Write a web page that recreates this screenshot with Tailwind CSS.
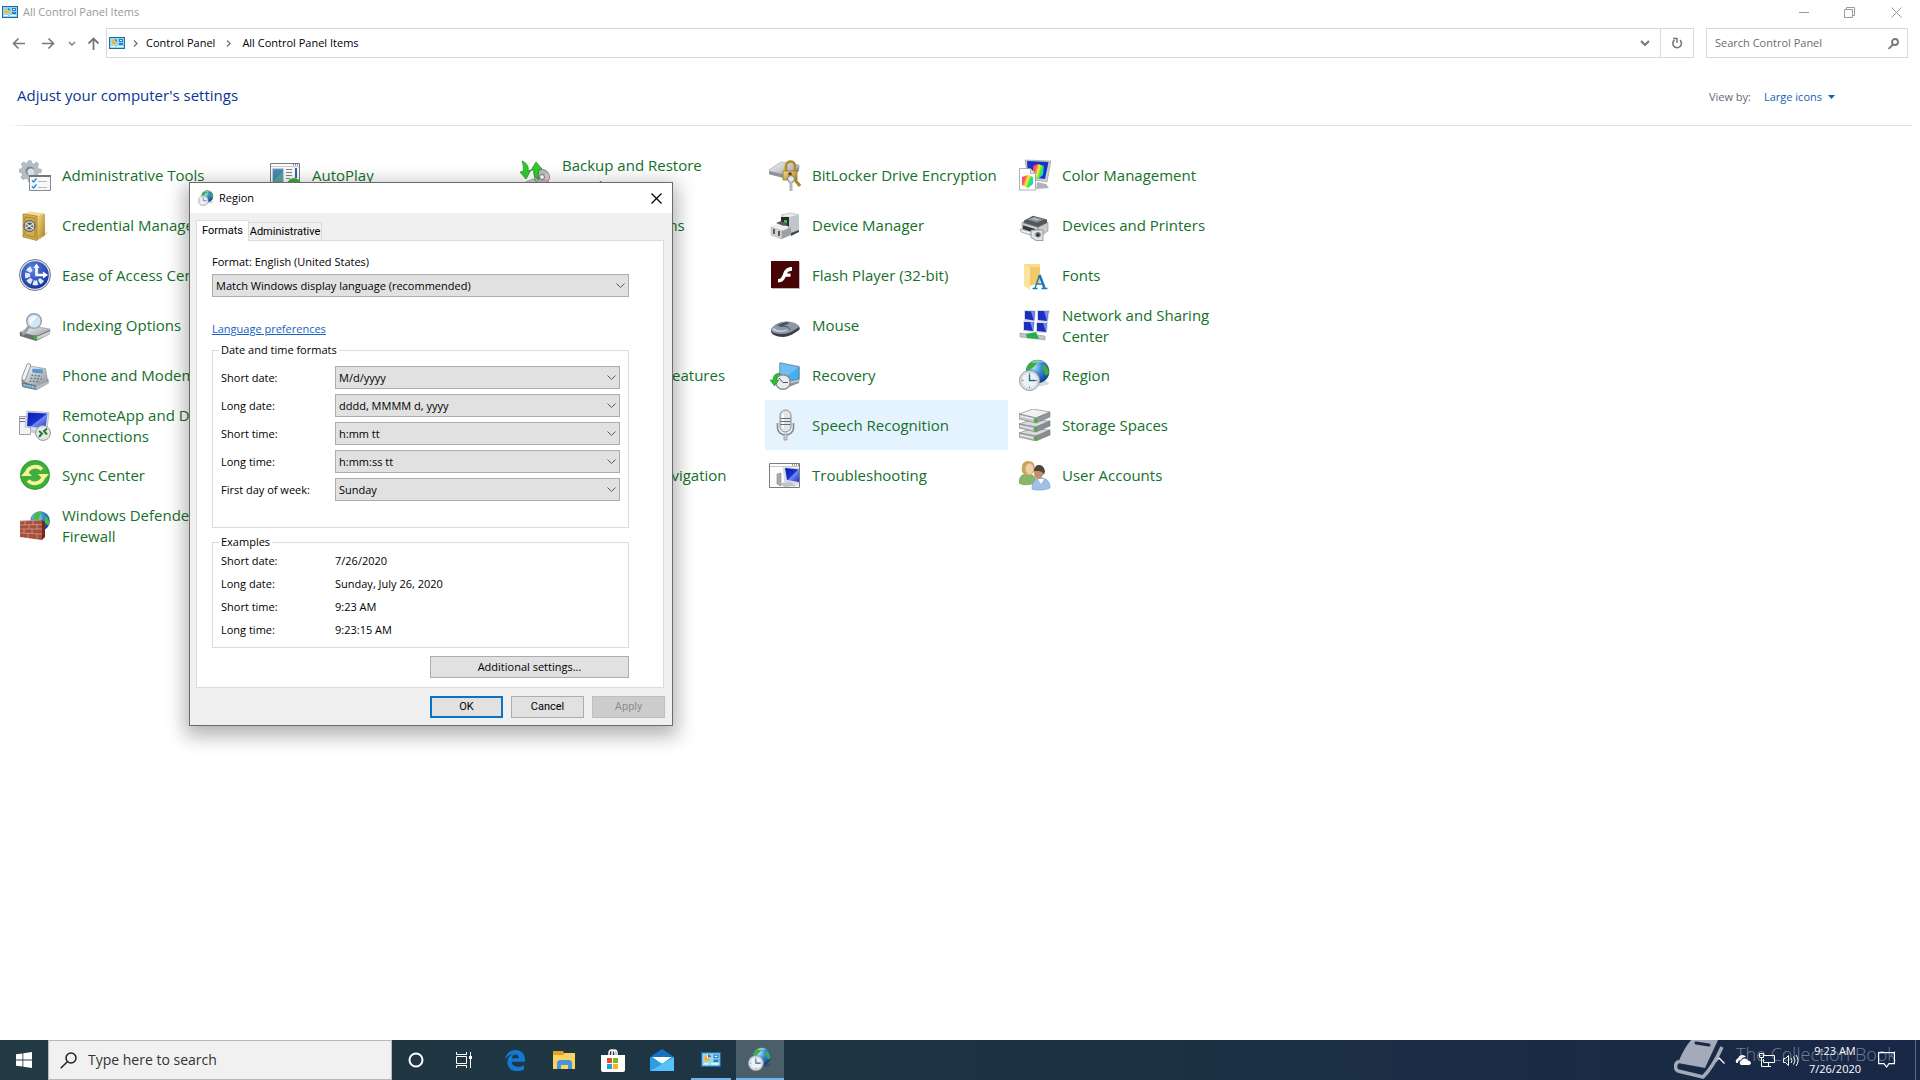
<!DOCTYPE html>
<html lang="en">
<head>
    <meta charset="UTF-8">
    <meta name="viewport" content="width=device-width, initial-scale=1.0">
    <script src="https://cdn.jsdelivr.net/npm/@tailwindcss/browser@4"></script>
    <title>All Control Panel Items</title>
</head>
<body class="relative flex h-screen flex-col overflow-hidden bg-white font-['Open_Sans','Noto_Sans',sans-serif] text-[11px] leading-4 text-black">

    <!-- shared icons -->
    <svg class="absolute size-0" aria-hidden="true">
        <defs>
            <radialGradient id="g-globe" cx="0.35" cy="0.3" r="0.8"><stop offset="0" stop-color="#b5e4fb"/><stop offset="0.4" stop-color="#3d8edb"/><stop offset="1" stop-color="#0a2f80"/></radialGradient>
            <linearGradient id="g-screen" x1="0" y1="0" x2="1" y2="1"><stop offset="0" stop-color="#0a1cae"/><stop offset="0.5" stop-color="#1a32d0"/><stop offset="0.55" stop-color="#6f8df5"/><stop offset="1" stop-color="#1b2fc4"/></linearGradient>
            <linearGradient id="g-metal" x1="0" y1="0" x2="1" y2="1"><stop offset="0" stop-color="#f7f8f9"/><stop offset="1" stop-color="#8d9196"/></linearGradient>
            <linearGradient id="g-gold" x1="0" y1="0" x2="1" y2="1"><stop offset="0" stop-color="#f6dd8c"/><stop offset="1" stop-color="#ab7d1c"/></linearGradient>
            <linearGradient id="g-rgb" x1="0" y1="0" x2="1" y2="0.4"><stop offset="0" stop-color="#ff2bd0"/><stop offset="0.3" stop-color="#ff5a3c"/><stop offset="0.55" stop-color="#ffe93b"/><stop offset="0.8" stop-color="#2ee84a"/><stop offset="1" stop-color="#24c7f5"/></linearGradient>
            <radialGradient id="g-ease" cx="0.4" cy="0.3" r="0.8"><stop offset="0" stop-color="#5c86e6"/><stop offset="1" stop-color="#0c2a94"/></radialGradient>
        </defs>

        <symbol id="panel" viewBox="0 0 16 12">
            <path fill="#1f6b9c" d="M0 0h16v12H0z"/><path fill="#8ed8fa" d="M1 1h14v10H1z"/>
            <circle cx="5" cy="5" r="2.6" fill="#fff"/><path fill="#e8b23c" d="M5 5V2.400A2.600 2.600 0 1 0 7.600 5z"/><path fill="#2d83bd" d="M5.600 1.900v2.500h2.500A2.500 2.500 0 0 0 5.600 1.900z"/>
            <path fill="#2d7fb5" d="M10 2h4v3h-4zM10 6h4v2h-4z"/><path fill="#fff" d="M11 3h2v1h-2zM2 9h4v1H2zM8 9h6v1H8z"/>
        </symbol>
        <symbol id="globe-clock" viewBox="0 0 32 32">
            <ellipse cx="20" cy="24" rx="10" ry="3" fill="#000" opacity="0.15"/>
            <circle cx="18.500" cy="12.500" r="11.800" fill="url(#g-globe)"/>
            <path fill="#3dae3a" d="M9 6c3-4 8-6 13-4-2 2-4 1-5 3s-2 3-4 4-3 4-5 3c-1-2 0-4 1-6zM25 5c3 2 5 6 5 9l-3 3c-2-2-1-4-3-6s0-4 1-6z"/>
            <path fill="#2f9c46" opacity="0.7" d="M14 17c3-2 6 0 7 2l-1 3z"/>
            <path fill="#dff5ff" opacity="0.5" d="M12 4c4-4 11-3 13 0-4-1-9 0-13 0z"/>
            <circle cx="10.500" cy="21.500" r="10" fill="#dde2e8" stroke="#8f989f"/><circle cx="10.500" cy="21.500" r="8" fill="#eef2f7" stroke="#c3cad1" stroke-width="0.700"/>
            <path stroke="#7a828a" fill="none" d="M10.500 14v1.500M10.500 27.500V29M3 21.500h1.500M16.500 21.500H18"/>
            <path stroke="#256b8c" stroke-width="1.400" fill="none" d="M10.500 15.500v6h6"/>
        </symbol>
        <symbol id="admin" viewBox="0 0 32 32">
            <path fill="#b4bdc6" stroke="#94a0ab" stroke-width="0.600" d="m9 2 3-.6.8 3 2 .8L17.500 3l2.200 2-1.400 2.800 1 2 3 .5v3l-3 .7-.8 2 1.600 2.500-2.200 2.200-2.700-1.500-2 .8-.7 3h-3l-.7-3-2-.8-2.600 1.500L2 18.500l1.500-2.700-.8-2-2.500-.6v-3l2.700-.6.8-2L2.300 5l2.200-2.100L7 4.500l1.500-.6z"/>
            <circle cx="11" cy="12" r="4.500" fill="#7b8996"/><circle cx="12" cy="13" r="3.500" fill="#d9dfe4"/>
            <path fill="#f8f8f8" stroke="#858b91" d="M10.500 16.500h21v15h-21z"/><path fill="#6f767c" d="M10 16h22v2H10z"/>
            <path stroke="#2a8ae0" stroke-width="1.500" fill="none" d="m13 21.500 1.500 1.500 3-3.500M13 27.500l1.500 1.500 3-3.500"/><path stroke="#b9b9b9" d="M19 22.500h9M19 28.500h9"/>
        </symbol>
        <symbol id="safe" viewBox="0 0 32 32">
            <path fill="#c7c9c4" d="m24 25 6-3-4 5-6 4z" opacity="0.6"/>
            <path fill="#f0dc98" d="m4 5 7-2.500 15 2L18 7z"/><path fill="url(#g-gold)" d="m18 7 8-2.500V26l-8 5.500z"/><path fill="#d4ae4a" stroke="#8f6b15" stroke-width="0.600" d="m4 5 14 2v24.500L4 28z"/>
            <path fill="none" stroke="#a8822b" d="m6 8 10 1.500v19L6 26z"/><circle cx="10.500" cy="17" r="5.500" fill="#babdbd" stroke="#4d5255"/><circle cx="10.500" cy="17" r="3.200" fill="#4f5459"/><path stroke="#e5e7e8" stroke-width="1.300" d="m6.500 14 8 6M6 19.500l9-5"/>
        </symbol>
        <symbol id="ease" viewBox="0 0 32 32">
            <circle cx="16" cy="16" r="15.500" fill="#e6e9ee" stroke="#6f7787"/><circle cx="16" cy="16" r="13.800" fill="url(#g-ease)"/>
            <path stroke="#e3eaf9" stroke-width="5" stroke-dasharray="4.500 1.500" fill="none" d="M12.500 9.500A7.500 7.500 0 0 0 9.500 20 8 8 0 0 0 23 20.500"/>
            <path stroke="#fff" stroke-width="2.600" fill="none" d="M17.500 17.300V7M17.500 16h8"/><path fill="#fff" d="m14.500 9 3-4.500 3 4.500zM24 12.500l5 3.500-5 3.500z"/>
        </symbol>
        <symbol id="indexing" viewBox="0 0 32 32">
            <path fill="url(#g-metal)" stroke="#85898d" stroke-width="0.500" d="m1 23 13-6 17 3v4l-14 6-16-4z"/><path fill="#6a6f73" d="m1 23 16 4 14-6v4l-14 7-16-5z"/><path fill="#cdd0d3" d="m17 28 14-6v3l-14 6z"/><path fill="#39b52b" d="m15 26 3 .5V31l-3-.500z"/>
            <circle cx="15" cy="12" r="7.300" fill="#cfe6f8" stroke="#9aa2aa" stroke-width="1.500"/><path d="M10 11c1-3 5-5 8-3l-7 8z" fill="#fff" opacity="0.8"/><path stroke="#9ba0a5" stroke-width="3" stroke-linecap="round" d="m9.500 18-5 7"/>
        </symbol>
        <symbol id="phone" viewBox="0 0 32 32">
            <g transform="translate(1 3) scale(0.95)">
                <path fill="#7b858c" d="m1 19 3 5 14 5 12-7v-4z"/><path fill="url(#g-metal)" stroke="#818589" stroke-width="0.600" d="m9 4 18 3 2 13-13 6-13-6z"/>
                <path fill="#5596cf" d="m13 7 11 1v4l-11-1z"/><path stroke="#5d7d94" stroke-width="1.600" stroke-dasharray="2 1.500" d="m12 14 11 1M11 17l12 1M10 20l11 1"/>
                <path fill="none" stroke="#7e8387" stroke-width="5" stroke-linecap="round" d="M9 4 4 17"/><path fill="none" stroke="#eff1f2" stroke-width="3.500" stroke-linecap="round" d="M9 4 4 17"/>
                <path fill="#66a5c4" stroke="#667278" d="m2 22 15 3v4L3 26z"/><path stroke="#fff" stroke-dasharray="1 2" d="m4 24 12 3"/><path fill="#b5b9bc" d="m17 25 13-5v3l-13 7z"/>
            </g>
        </symbol>
        <symbol id="remote" viewBox="0 0 32 32">
            <path fill="#f3f4f6" stroke="#98a0a8" d="M.5 7.500h11v18H.500z"/><path stroke="#69737c" d="M1 9.500h5M1 12.500h5"/>
            <path fill="#dde1e5" stroke="#9aa0a7" stroke-width="0.600" d="m8 2 22 1.500-2 17L6 18z"/><path fill="url(#g-screen)" d="m9 3.500 19.500 1-2 15L8 17z"/><path fill="#c8ccd1" d="m12 20 6 1v4l-7-2z"/>
            <circle cx="24" cy="24" r="7.400" fill="#e7e9e8" stroke="#8f9594"/><path fill="none" stroke="#2f7a34" stroke-width="2" d="m20 22 3 2.500-3 3.500M28 19.500 25 22l3 3.500"/>
        </symbol>
        <symbol id="sync" viewBox="0 0 32 32">
            <circle cx="16" cy="16" r="15" fill="#3fae3b"/><circle cx="16" cy="16" r="14" fill="none" stroke="#2e9632" opacity="0.5"/>
            <path fill="none" stroke="#f5f39b" stroke-width="3.800" d="M7.500 16c0-8 10-11 15.500-5.500M24.500 16c0 8-10 11-15.500 5.500"/><path fill="#f7f18e" d="m2 17 5.500-6 5.500 6zM30 15l-5.500 6-5.500-6z"/>
        </symbol>
        <symbol id="firewall" viewBox="0 0 32 32">
            <circle cx="21" cy="12" r="9.800" fill="url(#g-globe)"/><path fill="#4cb944" d="M15 5c3-3 7-3 9-2l-3 3-1 5-6 1zM26 7c4 2 5 6 4 10l-4-3z"/>
            <path fill="#a5503f" d="m1 12 22-1v20L1 28z"/><path fill="#6d2a22" d="m23 11 3 2v15l-3 3z"/>
            <path stroke="#dba893" stroke-width="0.700" fill="none" d="m1 12 22-1M1 16l22-.500M1 20h22M1 24l22 1M6 12v4M14 11.500V16M10 16v4M18 15.500V20M5 20v4M13 20v4.500M9 24.500V29M18 25v4.500"/>
        </symbol>
        <symbol id="autoplay" viewBox="0 0 32 32">
            <path fill="#fbfbfb" stroke="#777e84" d="M1.500 4.500h29v26h-29z"/><path stroke="#c9cdd1" d="M2 7.500h28"/><path stroke="#444" stroke-dasharray="1 1" d="M24 5.800h6"/>
            <path fill="#bcd4e4" d="M3 9h12v20H3z"/><path fill="#57a69e" d="M4 12c5-3 8 0 10-1v18H4z"/><path fill="#3f7fb2" d="M4 10h10v3L4 22z" opacity="0.7"/>
            <path stroke="#7f868d" d="M17 10.500h6M17 13.500h6M17 16.500h6M17 19.500h4"/><path stroke="#3366b5" stroke-width="2" d="M27 9v10"/><circle cx="25" cy="26" r="7" fill="#36ad38"/>
        </symbol>
        <symbol id="backup" viewBox="0 0 32 32">
            <path fill="#c9ccce" stroke="#777" stroke-width="0.500" d="m2 25 12-5 16 3-8 9z"/><circle cx="23" cy="18" r="7.500" fill="#b9bbc0" stroke="#82868a"/><path fill="#e8c0d6" d="m23 18 6-4a8 8 0 0 1 0 8z"/><circle cx="23" cy="18" r="2.500" fill="#fff" stroke="#777"/>
            <path fill="#38c92f" stroke="#17871a" stroke-width="0.700" d="M3 2c5 2 7 6 6 10l3-1-5 9-6-7 3-.500c1-4 0-7-1-10.500zM17 3l6 7-3 .5c-1 4-1 6 0 10-5-2-6-6-5-10l-3 1z"/>
        </symbol>
        <symbol id="bitlocker" viewBox="0 0 32 32">
            <path fill="url(#g-metal)" stroke="#888" stroke-width="0.500" d="M0 11 12 3l18 3v4l-12 9L0 15z"/><path fill="#8f9396" d="m0 12 18 4 12-8v4l-12 8L0 15z"/>
            <path fill="none" stroke="#b08a2a" stroke-width="2.600" d="M17 12V7c0-6 9-6 9 0v5"/><path fill="url(#g-gold)" stroke="#8d6818" stroke-width="0.700" d="M14 12h14v9H14z"/><circle cx="21" cy="15" r="1.800" fill="#5d430b"/>
            <path fill="none" stroke="#ad8425" stroke-width="3" d="m26 21 5 6"/><circle cx="22" cy="20" r="3.500" fill="#e3e6e8" stroke="#777d82"/><path fill="none" stroke="#858a8e" stroke-width="2.600" d="M22 23v9"/><path stroke="#dfe2e4" d="M22 23v9M23 28h2"/>
        </symbol>
        <symbol id="device" viewBox="0 0 32 32">
            <path fill="#ebecec" stroke="#9a9d9f" stroke-width="0.500" d="m12 6 10-2 8 2-10 3z"/><path fill="#c3c6c8" d="m20 8 10-2v16l-10 4z"/><path fill="#dcdedf" d="m12 6 8 2v18l-8-2z"/><path fill="#213026" d="M12 8h8v11h-8z"/><path fill="#4bb450" d="M15 11h3v3h-3z"/>
            <path fill="#ededed" d="m2 18 8-4 11 4-8 4z"/><path fill="#cfd1d3" stroke="#96999b" stroke-width="0.500" d="m2 18 11 4v8L2 26z"/><path fill="#9da1a4" d="m13 22 9-4v8l-9 4z"/><path fill="#545a5e" d="M4 20h2v5H4zM9 22h2v5H9zM7 14l5-2 7 3-4 2z"/><path fill="#424649" d="m22 24 8-3v2l-8 4z"/>
        </symbol>
        <symbol id="flash" viewBox="0 0 32 32">
            <path fill="#bbb" d="M3 3h28v27H3z"/><path fill="#460404" d="M2 2h28v27H2z"/>
            <path fill="#fff" d="M23 8v3.700c-3 0-4 .8-5 2.800h3.500v3.300h-4.800C15 21.500 13 23.500 9 23.500V20c3 0 4-2 5.200-5.500C15.700 10.500 18 8 23 8z"/>
        </symbol>
        <symbol id="mouse" viewBox="0 0 32 32">
            <path fill="#3a3f45" d="M2 21c4-7 14-10 22-7 6 2 8 5 6 7-4 3-10 7-16 7-7 0-13-3-12-7z"/><path fill="#8b98a8" d="M2 20c4-6 13-9 21-7 6 2 8 4 6 6-4 2-9 6-15 6-7 0-13-2-12-5z"/><path fill="#cbd2da" d="M3 20c2 3 9 4 14 2l3-2c-6 2-12 2-15-1z"/><path fill="#48515c" d="m8 16 9-3 4 1-9 4z"/><path stroke="#444c55" fill="none" d="M13 17c4 0 7 1 8 4"/>
        </symbol>
        <symbol id="recovery" viewBox="0 0 32 32">
            <g transform="translate(0 2)">
                <path fill="#c6cbd0" d="m10 1 21 4v15l-21 4z"/><path fill="#46aef0" stroke="#4d88ae" d="m11 2 19 4v12l-19 4z"/><path fill="#a6dcfb" opacity="0.4" d="m11 2 19 4-13 10-6 1z"/><path fill="#8c9399" d="m18 23 12-3v2l-10 4z"/>
                <circle cx="14" cy="21" r="7.300" fill="#e9ebec" stroke="#858d93" stroke-width="1.400"/><path stroke="#4d565d" fill="none" d="m10 17 4 4.500h5"/><path fill="#35b736" stroke="#168a20" stroke-width="0.500" d="M10 12c-5 1-6 4-6 7H1l4.500 6L10 19H7.500c0-3 1-5 4-6z"/>
            </g>
        </symbol>
        <symbol id="speech" viewBox="0 0 32 32">
            <path fill="none" stroke="#85898d" stroke-width="1.600" d="M8.500 14v5c0 9 16 9 16 0v-5"/><path fill="#cfd2d4" stroke="#84888c" stroke-width="0.700" d="M15 25h3v6h-3z"/>
            <rect x="11" y="1" width="11" height="22" rx="5.500" fill="#e2e4e6" stroke="#85898e"/><path fill="#fff" d="M13 5h2v14h-2z"/><path stroke="#696e73" d="M11.500 9.500h10M11.500 12.500h10M11.500 15.500h10"/>
        </symbol>
        <symbol id="trouble" viewBox="0 0 32 32">
            <path fill="#fcfcfc" stroke="#777c82" d="M.5 4.500h30v24H.500z"/><path stroke="#c6cacd" d="M1 7.500h29"/><path stroke="#444" stroke-dasharray="1 1" d="M23 6h7"/>
            <path fill="#a7adb4" stroke="#777" stroke-width="0.500" d="m8 15 4-1v13l-4-2z"/><path fill="#d7dade" d="m14 8 16 1v17l-15-3z"/><path fill="url(#g-screen)" d="m16 9 14 1.500V23l-12-2z"/><path fill="#bfc4c9" d="m11 24 10-1 7 4-13 1z"/>
        </symbol>
        <symbol id="color" viewBox="0 0 32 32">
            <path fill="#c8cdd2" stroke="#858b91" stroke-width="0.500" d="m6 1 26 1-4 21-19-3z"/><path fill="#1833c4" d="m8 2 21.500 1-3.500 17L9 18z"/><path fill="url(#g-rgb)" d="m14 7 5-2 6 2-1 9-5 4-5-4z"/><path fill="#aeb4ba" d="m18 23 9 2 3 4-13 1z"/>
            <path fill="#fff" stroke="#8b9095" stroke-width="0.700" d="M.5 9.500h11l5 5V31H.500z"/><path fill="#e2e5e7" stroke="#8b9095" stroke-width="0.600" d="m11.500 9.500 5 5h-5z"/><path fill="url(#g-rgb)" d="m3 18 6-2 5 2v7l-5 4-6-3z"/>
        </symbol>
        <symbol id="printer" viewBox="0 0 32 32">
            <g transform="translate(0 3) scale(1 0.95)">
                <path fill="#54585c" d="m5 9 9-5 14 4v4l-10 5L4 12z"/><path fill="#8a9197" d="m8 8 7-3 10 3-7 3z"/><path fill="#a8bccb" d="m12 7 3-1 6 2-3 1z"/>
                <path fill="#c8cacc" stroke="#77797c" stroke-width="0.500" d="m3 11 16 5v11L3 21zM19 16l10-5v9l-10 7z"/><path fill="#35383b" d="m4 14 12 4v4L4 18z"/><path fill="#eff0f1" stroke="#777" stroke-width="0.500" d="m1 18 12 3-2 3-9-3z"/>
                <path fill="#dfe1e2" stroke="#77797c" stroke-width="0.700" d="M12 19h12v11h-7l-5-3z"/><circle cx="19" cy="24" r="3.500" fill="#6e7478" stroke="#f3f3f3"/><circle cx="19" cy="24" r="1.400" fill="#272a2d"/>
            </g>
        </symbol>
        <symbol id="fonts" viewBox="0 0 32 32">
            <path fill="#f1cb69" d="M5 5h16v19l-14 4-2-3z"/><path fill="#f9dc8e" d="M5 5h16v3H5z"/><path fill="#fbe3a0" d="m5 5 6 4v22l-6-4z"/>
            <path fill="none" stroke="#2178bb" stroke-width="2.600" d="m20.500 16 5 13"/><path fill="none" stroke="#2178bb" stroke-width="1.400" d="m20.500 16-4.500 13M18 25h6M13.500 29.500h5M22.500 29.500h6"/>
        </symbol>
        <symbol id="network" viewBox="0 0 32 32">
            <g fill="#d6d9dd"><path d="m5 1 12 .5-1 11L5 12zM18 1h13l-2 12-11-.500zM4 12h12l-1 11-11-1zM17 13h12l-1 11-11-.500z"/></g>
            <g fill="#1b2ebd"><path d="m6 2 10 .5-1 9L6 10zM19 2h10.500L28 12l-9-1zM5 13h10l-1 9-9-1zM18 14h10l-1 9-9-1z"/></g><path fill="#7689ef" d="M12 2.500h4l-1 9zM25 2h4.500L28 12zM11 13h4l-1 9zM24 14h4l-1 9z"/>
            <path fill="#c0c6c8" stroke="#878d8f" stroke-width="0.500" d="m1 24 25 3v4L1 28z"/><path fill="#26ae4a" d="m7 25 10-2 3 7-12-1z"/>
        </symbol>
        <symbol id="storage" viewBox="0 0 32 32">
            <g stroke="#777b7f" stroke-width="0.600">
                <path fill="#d9dbdd" d="m0 24 12-4 19 1-14 6z"/><path fill="#b9bdc0" d="m0 24 17 3v5L0 28z"/><path fill="#898d91" d="m17 27 14-6v5l-14 6z"/>
                <path fill="#d9dbdd" d="m0 15 12-4 19 1-14 6z"/><path fill="#b9bdc0" d="m0 15 17 3v5L0 19z"/><path fill="#898d91" d="m17 18 14-6v5l-14 6z"/>
                <path fill="#f0f1f2" d="M0 5 14 0l17 3-14 6z"/><path fill="#c4c7ca" d="m0 5 17 4v5L0 10z"/><path fill="#92969a" d="m17 9 14-6v5l-14 6z"/>
            </g>
            <path fill="#4bb32a" d="m15 9.500 3 .5v3.500l-3-.500zM15 18.500l3 .5v3.500l-3-.500zM15 27.500l3 .5v3.500l-3-.500z"/><path stroke="#f6f6f6" d="m1 7 13 3M1 17l13 3M1 26l13 3"/>
        </symbol>
        <symbol id="users" viewBox="0 0 32 32">
            <path fill="#8bb567" stroke="#6d974c" stroke-width="0.600" d="M0 24c0-6 3-9 8-9s9 2 9 8c-4 3-13 4-17 1z"/><path fill="#c9a55c" d="M3 13C2 6 4 2 9 2s8 3 6 11l-3 3H6z"/><ellipse cx="10.500" cy="10" rx="4" ry="5.500" fill="#f0cfa6"/>
            <path fill="#9fc1e8" stroke="#7297c4" stroke-width="0.600" d="M13 30c0-8 4-11 9-11s9 3 9 10c-4 2-14 3-18 1z"/><path fill="#4d4640" d="M15 12c0-8 11-8 10 1l-2 4-6-3z"/><ellipse cx="19.500" cy="14" rx="4.500" ry="6" fill="#c78f64"/><path fill="#4d4640" d="M15 12c1-7 10-7 11 0l-1 4c-1-4-5-4-7-4z"/><path fill="#fff" d="m19 20 3 5 3-5z"/>
        </symbol>
    </svg>

    <!-- title bar -->
    <header class="flex h-6 shrink-0 items-center pl-0.5">
        <svg class="h-3 w-4"><use href="#panel"/></svg>
        <h1 class="ml-[5px] grow text-[#999999]">All Control Panel Items</h1>
        <div class="flex text-[#999999]">
            <button class="flex h-6 w-[45px] items-center justify-center" aria-label="Minimize"><svg class="size-[11px]" viewBox="0 0 11 11" fill="none" stroke="currentColor"><path d="M0 5.500h10"/></svg></button>
            <button class="flex h-6 w-[45px] items-center justify-center" aria-label="Restore"><svg class="size-[11px]" viewBox="0 0 11 11" fill="none" stroke="currentColor"><path d="M.5 2.500h8v8h-8zM2.500 2V.500h8v8H9"/></svg></button>
            <button class="flex h-6 w-12 items-center justify-center" aria-label="Close"><svg class="size-[11px]" viewBox="0 0 11 11" fill="none" stroke="currentColor"><path d="m.5.5 10 10M10.500.500l-10 10"/></svg></button>
        </div>
    </header>

    <!-- address bar -->
    <nav class="mt-1 flex h-[30px] shrink-0 items-center pr-3 text-[#777777]">
        <button class="ml-3 mr-[17px]" aria-label="Back"><svg class="size-[13px]" viewBox="0 0 13 13" fill="none" stroke="currentColor" stroke-width="1.600"><path d="M13 6.500H1.500M6.500 1.500l-5 5 5 5"/></svg></button>
        <button class="mr-[13px]" aria-label="Forward"><svg class="size-[13px]" viewBox="0 0 13 13" fill="none" stroke="currentColor" stroke-width="1.600"><path d="M0 6.500h11.500M6.500 1.500l5 5-5 5"/></svg></button>
        <button class="mr-[11px]" aria-label="Recent locations"><svg class="h-[5px] w-2" viewBox="0 0 8 5" fill="none" stroke="currentColor" stroke-width="1.400"><path d="m1 1 3 3 3-3"/></svg></button>
        <button class="mr-1.5" aria-label="Up"><svg class="size-[13px]" viewBox="0 0 13 13" fill="none" stroke="currentColor" stroke-width="1.800"><path d="M6.500 13V1.500M1.500 6.500l5-5 5 5"/></svg></button>
        <div class="flex h-[30px] grow items-center border border-[#d9d9d9] pl-0.5">
            <svg class="h-3 w-4"><use href="#panel"/></svg>
            <svg class="mx-2 h-[7px] w-[5px]" viewBox="0 0 5 7" fill="none" stroke="currentColor" stroke-width="1.400"><path d="m1 .5 3 3-3 3"/></svg>
            <a href="#" class="text-black">Control Panel</a>
            <svg class="mx-[11px] h-[7px] w-[5px]" viewBox="0 0 5 7" fill="none" stroke="currentColor" stroke-width="1.400"><path d="m1 .5 3 3-3 3"/></svg>
            <a href="#" class="grow text-black">All Control Panel Items</a>
            <button class="flex h-full w-[30px] items-center justify-center" aria-label="Previous locations"><svg class="h-1.5 w-2.5" viewBox="0 0 10 6" fill="none" stroke="currentColor" stroke-width="2"><path d="m1 1 4 4 4-4"/></svg></button>
            <button class="flex h-full w-[33px] items-center justify-center border-l border-[#d9d9d9]" aria-label="Refresh"><svg class="size-3" viewBox="0 0 12 12" fill="none" stroke="currentColor" stroke-width="1.600"><path d="M9 3.200A4.300 4.300 0 1 1 3.500 3"/><path d="M2 1.500h4V6" stroke-width="1.500"/></svg></button>
        </div>
        <label class="ml-3 flex h-[30px] w-[202px] items-center border border-[#d9d9d9] px-2">
            <input type="text" aria-label="Search Control Panel" placeholder="Search Control Panel" class="min-w-0 grow outline-none placeholder:text-[#6d6d6d]">
            <svg class="size-[11px]" viewBox="0 0 11 11" fill="none" stroke="currentColor" stroke-width="1.800"><circle cx="7" cy="4" r="3"/><path d="M5 6.500.5 11"/></svg>
        </label>
    </nav>

    <!-- heading -->
    <div class="flex h-[67px] shrink-0 items-baseline justify-between pl-[17px] pr-[85px] pt-[27px]">
        <h2 class="text-[15px] leading-5 text-[#0b3595]">Adjust your computer's settings</h2>
        <div class="flex items-baseline text-[#5f6b78]">
            <span>View by:</span>
            <button class="ml-[13px] flex items-center text-[#1560b7]">Large icons<svg class="ml-1.5 h-1 w-[7px]" viewBox="0 0 7 4" fill="currentColor"><path d="M0 0h7L3.500 4z"/></svg></button>
        </div>
    </div>
    <div class="mx-2 h-px shrink-0 bg-linear-to-r from-white via-[#dbe1e8] from-0% via-1% to-[#dbe1e8]"></div>

    <main class="grow pl-[15px] pt-6">
        <ul id="items" class="grid grid-cols-[repeat(5,243px)] auto-rows-[50px] gap-x-[7px] text-[15px] leading-[21px] text-[#15702a]"></ul>
    </main>

    <!-- taskbar -->
    <footer class="relative flex h-10 shrink-0 items-center bg-linear-to-r from-[#223a43] via-[#1d3343] via-50% to-[#182746] text-white">
        <button class="flex h-10 w-12 items-center justify-center" aria-label="Start"><svg class="size-4" viewBox="0 0 16 16" fill="#fff"><path d="M0 2.300 6.500 1.400v6.200H0zM7.300 1.200 16 0v7.600H7.300zM0 8.400h6.500v6.200L0 13.700zM7.300 8.400H16V16l-8.700-1.200z"/></svg></button>
        <label class="flex h-10 w-[344px] items-center border border-[#b9b9b9] bg-[#f1f1f1] px-[11px] text-[#333333]">
            <svg class="size-[17px]" viewBox="0 0 17 17" fill="none" stroke="#222" stroke-width="1.500"><circle cx="11" cy="6" r="5"/><path d="M7.300 9.700.7 16.300"/></svg>
            <input type="text" aria-label="Type here to search" placeholder="Type here to search" class="ml-[11px] min-w-0 grow text-sm outline-none placeholder:text-[#333333]">
        </label>
        <button class="flex h-10 w-12 items-center justify-center" aria-label="Cortana"><svg class="size-4" viewBox="0 0 16 16" fill="none" stroke="#fff" stroke-width="2"><circle cx="8" cy="8" r="6.500"/></svg></button>
        <button class="flex h-10 w-12 items-center justify-center" aria-label="Task View"><svg class="size-4" viewBox="0 0 16 16" fill="none" stroke="#fff"><path d="M.5 0v2.500h10V0M.5 4.500h10v7H.500zM.5 16v-2.500h10V16M14.500 0v16" /><path fill="#fff" stroke="none" d="M13 4h3v3h-3z"/></svg></button>
        <div class="ml-[3px] flex gap-px">
            <button class="flex h-10 w-12 items-center justify-center" aria-label="Edge"><svg class="h-[21px] w-5" viewBox="0 0 20 21" fill="#1379d4"><path d="M0 9.300C1 3.500 5 0 10.500 0 16.500 0 20 4.300 20 9.500v2.300H6.700c.2 3.500 3.200 5 6.300 5 2.300 0 4.300-.6 6-1.600v4.300c-2 1-4.300 1.500-7 1.500-5.800 0-9.600-3.500-9.600-8.700 0-4 2-6.800 5.600-8.300C4.500 4.500 2 6.500 0 9.300zm6.800-1.100h7c0-2.200-1.200-3.700-3.300-3.700-2 0-3.300 1.500-3.700 3.700z"/></svg></button>
            <button class="flex h-10 w-12 items-center justify-center" aria-label="File Explorer"><svg class="h-[18px] w-[22px]" viewBox="0 0 22 18"><path fill="#e0a526" d="M0 0h10l1 2h11v4H0z"/><path fill="#fbd365" d="M0 4h10l2-2h10v16H0z"/><path fill="#4797d8" d="M4 18v-7l2-2h11l2 2v7h-4v-4H8v4z"/></svg></button>
            <button class="flex h-10 w-12 items-center justify-center" aria-label="Store"><svg class="h-[23px] w-6" viewBox="0 0 24 23"><path fill="none" stroke="#fff" stroke-width="1.500" d="M8 6V4c0-4 6-4 6 0v2M11 6V4c0-4 5-4 5 0v2"/><path fill="#fff" d="M0 6h24v15q0 2-2 2H2q-2 0-2-2z"/><path fill="#e34f25" d="M6 9h5v5H6z"/><path fill="#7eb627" d="M12 9h5v5h-5z"/><path fill="#1f9fe2" d="M6 15h5v5H6z"/><path fill="#f8b41b" d="M12 15h5v5h-5z"/></svg></button>
            <button class="flex h-10 w-12 items-center justify-center" aria-label="Mail"><svg class="h-[22px] w-6" viewBox="0 0 24 22"><path fill="#1472c4" d="M0 8 12 0l12 8v6H0z"/><path fill="#fff" d="M2 8h20l-10 7z"/><path fill="#36aaf0" d="m0 8 24 14H0z"/><path fill="#55c3f9" d="M24 8v14H0l12-7z"/><path fill="#2b9ee6" d="m0 22 12-7L0 8z"/></svg></button>
            <button class="flex h-10 w-12 items-center justify-center" aria-label="Control Panel"><span class="flex h-10 w-10 items-center justify-center border-b-2 border-[#76b3e8]"><svg class="h-[15px] w-5"><use href="#panel"/></svg></span></button>
            <button class="flex h-10 w-12 items-center justify-center border-b-2 border-[#76b3e8] bg-[#4b5f6a]" aria-label="Region"><svg class="size-6"><use href="#globe-clock"/></svg></button>
        </div>
        <div class="ml-auto flex items-center">
            <button class="flex w-6 justify-center" aria-label="Show hidden icons"><svg class="h-[7px] w-3" viewBox="0 0 12 7" fill="none" stroke="#fff" stroke-width="1.300"><path d="m.5 6.500 5.500-5.500 5.500 5.500"/></svg></button>
            <button class="flex w-6 justify-center" aria-label="OneDrive"><svg class="h-2.5 w-4" viewBox="0 0 16 10" fill="#fff"><path d="M1.500 8A3 3 0 0 1 3 3.200 4.500 4.500 0 0 1 11 2c-3 0-4 1-5 3-2 0-3 1-3 3z"/><path d="M6 10a2.500 2.500 0 0 1 .5-4.500C8 2.500 12 3 13 5.500c4 .5 3.500 4.500 1 4.500z"/></svg></button>
            <button class="flex w-6 justify-center" aria-label="Network"><svg class="h-3.5 w-4" viewBox="0 0 16 14" fill="none" stroke="#fff"><path d="M4 2.500h11.500v7h-11V6M.5.500h4v4h-4zM2.500 5v8.500H12M9.500 10v3"/></svg></button>
            <button class="flex w-6 justify-center" aria-label="Volume"><svg class="h-[13px] w-4" viewBox="0 0 16 13" fill="none" stroke="#fff"><path d="M.5 4.500h2l3-3v10l-3-3h-2zM8 4q2 2.500 0 5M10.500 2.500q3 4 0 8M13 1q4 5.500 0 11"/></svg></button>
            <div class="ml-1 w-14 text-center leading-[18px]">
                <p>9:23 AM</p>
                <p>7/26/2020</p>
            </div>
            <button class="ml-[15px] mr-5 flex w-[17px] justify-center" aria-label="Notifications"><svg class="h-4 w-[17px]" viewBox="0 0 17 16" fill="none" stroke="#fff" stroke-width="1.200"><path d="M.6.6h15.800v11H11L8.500 15 6 11.600H.600z"/></svg></button>
            <div class="h-10 w-[5px] border-l border-[#5a6a80]"></div>
        </div>
        <!-- watermark -->
        <div class="pointer-events-none absolute right-6 bottom-0 flex items-end text-[#ccd2dc]/50">
            <svg class="h-10 w-[50px]" viewBox="0 0 50 40"><path fill="#a3abba" d="M17 0h27L31 28 4 23C7 15 12 6 17 0z"/><path fill="none" stroke="#a3abba" stroke-width="3.500" stroke-linejoin="round" d="M5 21c-4 2-5 8-1 10l25 6C36 30 43 18 48 7"/><path fill="none" stroke="#1b2946" stroke-width="3" stroke-linecap="round" d="m22 3 13 2"/></svg>
            <span class="ml-3 pb-3 text-lg leading-7 font-light">The Collection Book</span>
        </div>
    </footer>

    <!-- region dialog -->
    <section role="dialog" aria-labelledby="region-title" class="absolute left-[189px] top-[182px] w-[484px] border border-[#6b6b6b] bg-[#f0f0f0] pb-[7px] shadow-[0_6px_18px_4px_rgba(0,0,0,0.3)]">
        <div class="flex h-[30px] items-center bg-white pl-2 pr-2.5">
            <svg class="size-4"><use href="#globe-clock"/></svg>
            <h2 id="region-title" class="ml-[5px] grow">Region</h2>
            <button aria-label="Close"><svg class="size-[11px]" viewBox="0 0 11 11" fill="none" stroke="#000" stroke-width="1.200"><path d="m.5.5 10 10M10.500.500l-10 10"/></svg></button>
        </div>
        <div role="tablist" class="ml-1.5 mt-[7px] flex items-end">
            <button role="tab" aria-selected="true" class="relative z-10 -mb-px h-[21px] w-[53px] border border-b-0 border-[#dcdcdc] bg-white font-['Roboto',sans-serif]">Formats</button>
            <button role="tab" aria-selected="false" class="h-[18px] w-[73px] border border-b-0 border-l-0 border-[#dcdcdc] font-['Roboto',sans-serif]">Administrative</button>
        </div>
        <div class="ml-1.5 mr-2 border border-[#dcdcdc] bg-white pb-[9px] pl-[15px] pr-[34px]">
            <form>
                <label for="format" class="block pt-[13px]">Format: English (United States)</label>
                <div class="relative mt-1">
                    <select id="format" class="block h-[23px] w-full appearance-none border border-[#adadad] bg-[#e1e1e1] pl-[3px]"><option>Match Windows display language (recommended)</option></select>
                    <svg class="pointer-events-none absolute right-1 top-[9px] h-[5px] w-[9px]" viewBox="0 0 9 5" fill="none" stroke="#555"><path d="m.5.5 4 4 4-4"/></svg>
                </div>
                <a href="#" class="mt-6 inline-block text-[#1463c1] underline">Language preferences</a>

                <fieldset class="mt-[5px] border border-[#dcdcdc] pb-[26px] pl-2 pr-2">
                    <legend class="-ml-0.5 px-0.5">Date and time formats</legend>
                    <div id="formats" class="mt-2 flex flex-col gap-[5px]"></div>
                </fieldset>

                <fieldset class="mt-[6px] border border-[#dcdcdc] pb-[9px] pl-2">
                    <legend class="-ml-0.5 px-0.5">Examples</legend>
                    <dl class="mt-[3px] grid grid-cols-[114px_1fr] gap-y-[7px]">
                        <dt>Short date:</dt><dd>7/26/2020</dd>
                        <dt>Long date:</dt><dd>Sunday, July 26, 2020</dd>
                        <dt>Short time:</dt><dd>9:23 AM</dd>
                        <dt>Long time:</dt><dd>9:23:15 AM</dd>
                    </dl>
                </fieldset>
                <button type="button" class="ml-auto mt-2 block h-[22px] w-[199px] border border-[#adadad] bg-[#e1e1e1]">Additional settings...</button>
            </form>
        </div>
        <div class="mr-[7px] mt-2 flex justify-end gap-2 font-['Roboto',sans-serif]">
            <button class="h-[22px] w-[73px] border-2 border-[#0b73c7] bg-[#e1e1e1]">OK</button>
            <button class="h-[22px] w-[73px] border border-[#adadad] bg-[#e1e1e1]">Cancel</button>
            <button disabled class="h-[22px] w-[73px] border border-[#bfbfbf] bg-[#cccccc] text-[#8d8d8d]">Apply</button>
        </div>
    </section>

    <script>
        const itemsDOM = document.getElementById("items");
        const formatsDOM = document.getElementById("formats");

        const items = [
            ["admin", "Administrative Tools"], ["autoplay", "AutoPlay"], ["backup", "Backup and Restore (Windows 7)"], ["bitlocker", "BitLocker Drive Encryption"], ["color", "Color Management"],
            ["safe", "Credential Manager"], ["globe-clock", "Date and Time"], ["panel", "Default Programs"], ["device", "Device Manager"], ["printer", "Devices and Printers"],
            ["ease", "Ease of Access Center"], ["fonts", "File Explorer Options"], ["storage", "File History"], ["flash", "Flash Player (32-bit)"], ["fonts", "Fonts"],
            ["indexing", "Indexing Options"], ["firewall", "Internet Options"], ["device", "Keyboard"], ["mouse", "Mouse"], ["network", "Network and Sharing Center"],
            ["phone", "Phone and Modem"], ["panel", "Power Options"], ["panel", "Programs and Features"], ["recovery", "Recovery"], ["globe-clock", "Region"],
            ["remote", "RemoteApp and Desktop Connections"], ["panel", "Security and Maintenance"], ["speech", "Sound"], ["speech", "Speech Recognition", true], ["storage", "Storage Spaces"],
            ["sync", "Sync Center"], ["remote", "System"], ["panel", "Taskbar and Navigation"], ["trouble", "Troubleshooting"], ["users", "User Accounts"],
            ["firewall", "Windows Defender<br>Firewall"], ["fonts", "Work Folders"]
        ];

        const formats = [
            ["short-date", "Short date:", "M/d/yyyy"],
            ["long-date", "Long date:", "dddd, MMMM d, yyyy"],
            ["short-time", "Short time:", "h:mm tt"],
            ["long-time", "Long time:", "h:mm:ss tt"],
            ["first-day", "First day of week:", "Sunday"]
        ];

        let result = "";
        items.forEach(([icon, title, hovered]) => {
            result += `
            <li class="${hovered ? "bg-[#e5f3ff]" : ""}">
                <a href="#" class="flex h-full items-center pl-1">
                    <svg class="size-8 shrink-0"><use href="#${icon}"/></svg>
                    <span class="ml-[11px] pt-px">${title}</span>
                </a>
            </li>`;
        });
        itemsDOM.innerHTML = result;

        result = "";
        formats.forEach(([id, label, value]) => {
            result += `
            <div class="grid grid-cols-[114px_1fr] items-center">
                <label for="${id}">${label}</label>
                <div class="relative">
                    <select id="${id}" class="block h-[23px] w-full appearance-none border border-[#adadad] bg-[#e1e1e1] pl-[3px]"><option>${value}</option></select>
                    <svg class="pointer-events-none absolute right-1 top-[9px] h-[5px] w-[9px]" viewBox="0 0 9 5" fill="none" stroke="#555"><path d="m.5.5 4 4 4-4"/></svg>
                </div>
            </div>`;
        });
        formatsDOM.innerHTML = result;
    </script>
</body>
</html>
